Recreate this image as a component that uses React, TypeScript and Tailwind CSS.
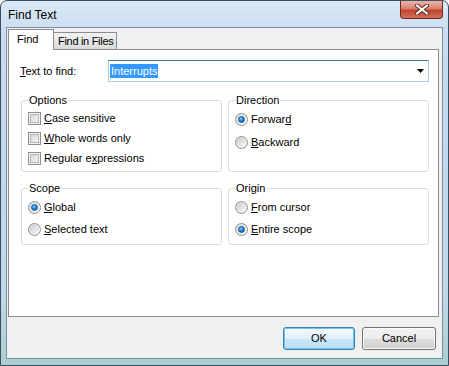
import React from "react";

function Checkbox() {
  return (
    <span className="w-[13px] h-[13px] shrink-0 border border-[#8e8f8f] bg-[#f4f4f4] p-[1px] flex">
      <span className="flex-1 border border-[#b4b6b9] bg-[linear-gradient(135deg,#d3d6db,#f6f6f6)]" />
    </span>
  );
}

function Radio({ checked }: { checked?: boolean }) {
  return (
    <span className="w-[13px] h-[13px] shrink-0 rounded-full border border-[#8e8f8f] bg-[linear-gradient(135deg,#d6d8dc,#fbfbfb)] flex items-center justify-center">
      {checked ? (
        <span className="w-[7px] h-[7px] rounded-full bg-[radial-gradient(circle_at_40%_35%,#8fd0ff_0%,#2c8ad8_40%,#0a4584_100%)] border border-[#1a5c9c]" />
      ) : (
        <span className="w-[9px] h-[9px] rounded-full bg-[linear-gradient(135deg,#c9ccd1,#f7f7f7)]" />
      )}
    </span>
  );
}

function Group({
  title,
  children,
  pb,
}: {
  title: string;
  children: React.ReactNode;
  pb: string;
}) {
  return (
    <fieldset
      className={`w-[201px] border border-[#d5dfe5] rounded-[3px] pt-[1px] ${pb}`}
    >
      <legend className="ml-[6px] px-[1px] leading-[14px] text-[11px] text-black">
        {title}
      </legend>
      {children}
    </fieldset>
  );
}

function CheckRow({ children }: { children: React.ReactNode }) {
  return (
    <div className="h-[20px] flex items-center pl-[6px] gap-[3px]">
      <Checkbox />
      <span>{children}</span>
    </div>
  );
}

function RadioRow({
  children,
  checked,
  h,
}: {
  children: React.ReactNode;
  checked?: boolean;
  h: string;
}) {
  return (
    <div className={`${h} flex items-center pl-[6px] gap-[3px]`}>
      <Radio checked={checked} />
      <span>{children}</span>
    </div>
  );
}

export default function App() {
  return (
    <div className="w-[449px] h-[366px] overflow-hidden rounded-t-[7px] border border-[#3b4d61] bg-[linear-gradient(to_bottom,#dbe8f5_0%,#c9dcef_10%,#c2d8ee_40%,#c0d9e8_80%,#a9cfcd_100%)] flex flex-col font-['Liberation_Sans',Arial,sans-serif] text-[11px] text-black">
      {/* title bar */}
      <div className="h-[26px] flex items-start">
        <div className="pl-[7px] pt-[6px] text-[12px] leading-[16px]">Find Text</div>
        <div className="ml-auto mr-[5px] w-[43px] h-[18px] rounded-b-[4px] border border-t-0 border-[#6d2a22] bg-[linear-gradient(to_bottom,#eab5a8_0%,#d9806c_45%,#c0442c_55%,#d2705a_100%)] flex items-center justify-center">
          <svg width="14" height="11" viewBox="0 0 14 11">
            <path d="M2 1.5 L12 9.5 M12 1.5 L2 9.5" stroke="#5a2a24" strokeWidth="4" strokeLinecap="round" />
            <path d="M2 1.5 L12 9.5 M12 1.5 L2 9.5" stroke="#ffffff" strokeWidth="2.2" strokeLinecap="round" />
          </svg>
        </div>
      </div>

      {/* client area */}
      <div className="ml-[5px] w-[437px] h-[332px] border border-[#7b8ea5] bg-[#f0f0f0] flex flex-col pt-[1px] pl-[1px]">
        {/* tabs */}
        <div className="h-[20px] flex items-end">
          <div className="relative z-10 w-[46px] h-[21px] -mb-px border border-b-0 border-[#898c95] bg-white pl-[8px] pt-[2px] leading-[14px] whitespace-nowrap">
            Find
          </div>
          <div className="-ml-px w-[64px] h-[17px] border border-b-0 border-[#898c95] bg-[linear-gradient(to_bottom,#f2f2f2,#dcdcdc)] pl-[4px] pt-[1px] leading-[14px] whitespace-nowrap overflow-hidden tracking-[-0.3px]">
            Find in Files
          </div>
        </div>

        {/* panel */}
        <div className="w-[431px] h-[268px] border border-[#898c95] bg-white flex flex-col">
          <div className="mt-[10px] h-[22px] flex items-center">
            <span className="ml-[11px] w-[88px]">
              <u>T</u>ext to find:
            </span>
            <div className="w-[321px] h-[22px] border border-[#a9cbe6] border-t-[#3d7bad] bg-white flex items-center">
              <span className="ml-[1px] h-[14px] leading-[14px] px-[1px] bg-[#3399ff] text-white">
                Interrupts
              </span>
              <svg className="ml-auto mr-[4px]" width="7" height="4" viewBox="0 0 7 4">
                <polygon points="0,0 7,0 3.5,4" fill="#000" />
              </svg>
            </div>
          </div>

          <div className="mt-[11px] ml-[12px] flex gap-[6px] items-stretch">
            <Group title="Options" pb="pb-[3px]">
              <CheckRow>
                <u>C</u>ase sensitive
              </CheckRow>
              <CheckRow>
                <u>W</u>hole words only
              </CheckRow>
              <CheckRow>
                Regular e<u>x</u>pressions
              </CheckRow>
            </Group>
            <Group title="Direction" pb="pb-[17px]">
              <RadioRow h="h-[23px]" checked>
                Forwar<u>d</u>
              </RadioRow>
              <RadioRow h="h-[23px]">
                <u>B</u>ackward
              </RadioRow>
            </Group>
          </div>

          <div className="mt-[9px] ml-[12px] flex gap-[6px] items-stretch">
            <Group title="Scope" pb="pb-[4px]">
              <RadioRow h="h-[22px]" checked>
                <u>G</u>lobal
              </RadioRow>
              <RadioRow h="h-[22px]">
                <u>S</u>elected text
              </RadioRow>
            </Group>
            <Group title="Origin" pb="pb-[4px]">
              <RadioRow h="h-[22px]">
                <u>F</u>rom cursor
              </RadioRow>
              <RadioRow h="h-[22px]" checked>
                <u>E</u>ntire scope
              </RadioRow>
            </Group>
          </div>
        </div>

        {/* buttons */}
        <div className="mt-[10px] flex justify-end gap-[7px] pr-[6px]">
          <button className="w-[72px] h-[23px] rounded-[3px] border border-[#3c7fb1] bg-[linear-gradient(to_bottom,#f2f9fd_0%,#e3f1fb_50%,#c9e5f7_51%,#bde0f6_100%)] shadow-[inset_0_0_0_1px_#6ec3ef] text-[11px]">
            OK
          </button>
          <button className="w-[74px] h-[23px] rounded-[3px] border border-[#707070] bg-[linear-gradient(to_bottom,#f2f2f2_0%,#ebebeb_50%,#dddddd_51%,#cfcfcf_100%)] shadow-[inset_0_0_0_1px_#fbfbfb] text-[11px]">
            Cancel
          </button>
        </div>
      </div>
    </div>
  );
}
